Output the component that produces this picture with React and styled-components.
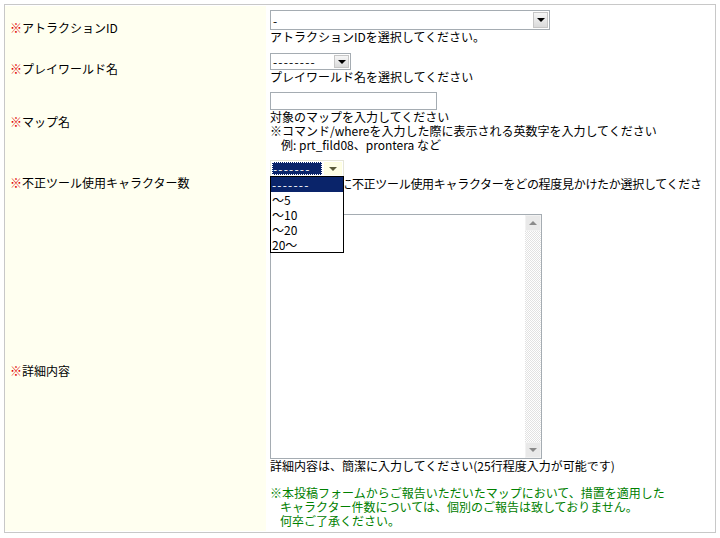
import React from 'react';
import styled, { createGlobalStyle } from 'styled-components';

const Global = createGlobalStyle`
  html, body { margin: 0; padding: 0; background: #fff; }
  body {
    font-family: "Noto Sans CJK JP", "Noto Sans", sans-serif;
    font-size: 12px;
    color: #000;
  }
`;

const Page = styled.div`
  padding: 4px;
`;

const FormTable = styled.div`
  width: 712px;
  box-sizing: border-box;
  border: 1px solid #c8c8c8;
  padding: 1px 1px 1px 0;
  display: grid;
  grid-template-columns: 261px 1fr;
`;

const LabelCell = styled.div`
  background: #fffff0;
  display: flex;
  align-items: center;
  padding: 0 5px;
  line-height: 14px;
`;

const Mark = styled.span`
  color: #e00000;
`;

const FieldCell = styled.div`
  padding: 4px 8px ${(p) => p.$pb ?? 4}px 4px;
  line-height: 14px;
  min-width: 0;
`;

const SelectBox = styled.div`
  position: relative;
  display: flex;
  width: ${(p) => p.$w}px;
  height: ${(p) => p.$h}px;
  box-sizing: border-box;
  border: 1px solid ${(p) => (p.$focus ? '#e6e6d8' : '#a5acb2')};
  background: #fff;
`;

const SelectValue = styled.span`
  flex: 1;
  display: flex;
  align-items: center;
  margin: 1px;
  padding: 0 1px;
  white-space: nowrap;
  line-height: 13px;
  letter-spacing: ${(p) => (p.$dash ? '1.2px' : '0')};
  background: ${(p) => (p.$active ? '#0a246a' : 'transparent')};
  color: ${(p) => (p.$active ? '#fff' : '#000')};
  outline: ${(p) => (p.$active ? '1px dotted #fff' : 'none')};
  outline-offset: -1px;
`;

const SelectButton = styled.span`
  width: ${(p) => (p.$focus ? 18 : 15)}px;
  flex-shrink: 0;
  margin: 1px;
  box-sizing: border-box;
  border: 1px solid ${(p) => (p.$focus ? '#ffffe0' : '#c6c6c6')};
  background: ${(p) => (p.$focus ? '#ffffe6' : 'linear-gradient(#f6f6f6, #dadada)')};
  display: flex;
  align-items: center;
  justify-content: center;
`;

const Arrow = styled.span`
  width: 0;
  height: 0;
  border-left: 4px solid transparent;
  border-right: 4px solid transparent;
  border-${(p) => (p.$up ? 'bottom' : 'top')}: 4px solid ${(p) => p.$color || '#000'};
`;

const DropList = styled.ul`
  position: absolute;
  z-index: 5;
  top: 100%;
  left: -1px;
  width: 74px;
  box-sizing: border-box;
  margin: 0;
  padding: 0;
  list-style: none;
  border: 1px solid #000;
  background: #fff;
`;

const DropItem = styled.li`
  height: 15px;
  line-height: 15px;
  padding: 0 1px;
  white-space: nowrap;
  letter-spacing: ${(p) => (p.$dash ? '1.2px' : '0')};
  background: ${(p) => (p.$selected ? '#0a246a' : '#fff')};
  color: ${(p) => (p.$selected ? '#fff' : '#000')};
`;

const TextInput = styled.input`
  display: block;
  width: 167px;
  height: 18px;
  box-sizing: border-box;
  margin: 0;
  padding: 1px 2px;
  border: 1px solid #a5acb2;
  font: inherit;
  outline: none;
`;

const Help = styled.div`
  white-space: nowrap;
  padding-left: ${(p) => p.$indent || 0}px;
`;

const WrapHelp = styled.div`
  white-space: normal;
  letter-spacing: -0.3px;
`;

const TextAreaFrame = styled.div`
  display: flex;
  width: 272px;
  height: 245px;
  box-sizing: border-box;
  border: 1px solid #a5acb2;
  background: #fff;
`;

const TextArea = styled.textarea`
  flex: 1;
  min-width: 0;
  margin: 0;
  padding: 2px;
  border: 0;
  resize: none;
  outline: none;
  font: inherit;
  overflow: hidden;
`;

const ScrollBar = styled.div`
  width: 16px;
  display: flex;
  flex-direction: column;
  justify-content: space-between;
  background: repeating-conic-gradient(#ffffff 0 25%, #e2e2e2 0 50%) 0 0 / 2px 2px;
`;

const ScrollButton = styled.div`
  height: 16px;
  box-sizing: border-box;
  border: 1px solid #f2f2f2;
  background: #e9e9e9;
  display: flex;
  align-items: center;
  justify-content: center;
`;

const Note = styled.div`
  margin-top: 13px;
  color: #008000;
`;

export default function App() {
  return (
    <>
      <Global />
      <Page>
        <FormTable>
          <LabelCell>
            <Mark>※</Mark>アトラクションID
          </LabelCell>
          <FieldCell $pb={5}>
            <SelectBox $w={280} $h={20}>
              <SelectValue>-</SelectValue>
              <SelectButton>
                <Arrow />
              </SelectButton>
            </SelectBox>
            <Help>アトラクションIDを選択してください。</Help>
          </FieldCell>

          <LabelCell>
            <Mark>※</Mark>プレイワールド名
          </LabelCell>
          <FieldCell>
            <SelectBox $w={81} $h={17}>
              <SelectValue $dash>--------</SelectValue>
              <SelectButton>
                <Arrow />
              </SelectButton>
            </SelectBox>
            <Help>プレイワールド名を選択してください</Help>
          </FieldCell>

          <LabelCell>
            <Mark>※</Mark>マップ名
          </LabelCell>
          <FieldCell>
            <TextInput type="text" />
            <Help>対象のマップを入力してください</Help>
            <Help>※コマンド/whereを入力した際に表示される英数字を入力してください</Help>
            <Help $indent={11}>例: prt_fild08、prontera など</Help>
          </FieldCell>

          <LabelCell>
            <Mark>※</Mark>不正ツール使用キャラクター数
          </LabelCell>
          <FieldCell $pb={5}>
            <SelectBox $w={74} $h={17} $focus>
              <SelectValue $active $dash>-------</SelectValue>
              <SelectButton $focus>
                <Arrow $color="#5a5a3a" />
              </SelectButton>
              <DropList>
                <DropItem $selected $dash>-------</DropItem>
                <DropItem>～5</DropItem>
                <DropItem>～10</DropItem>
                <DropItem>～20</DropItem>
                <DropItem>20～</DropItem>
              </DropList>
            </SelectBox>
            <WrapHelp>対象のマップに不正ツール使用キャラクターをどの程度見かけたか選択してください</WrapHelp>
          </FieldCell>

          <LabelCell>
            <Mark>※</Mark>詳細内容
          </LabelCell>
          <FieldCell $pb={3}>
            <TextAreaFrame>
              <TextArea />
              <ScrollBar>
                <ScrollButton>
                  <Arrow $up $color="#8a8a8a" />
                </ScrollButton>
                <ScrollButton>
                  <Arrow $color="#8a8a8a" />
                </ScrollButton>
              </ScrollBar>
            </TextAreaFrame>
            <Help>詳細内容は、簡潔に入力してください(25行程度入力が可能です)</Help>
            <Note>
              <Help>※本投稿フォームからご報告いただいたマップにおいて、措置を適用した</Help>
              <Help $indent={10}>キャラクター件数については、個別のご報告は致しておりません。</Help>
              <Help $indent={10}>何卒ご了承ください。</Help>
            </Note>
          </FieldCell>
        </FormTable>
      </Page>
    </>
  );
}
